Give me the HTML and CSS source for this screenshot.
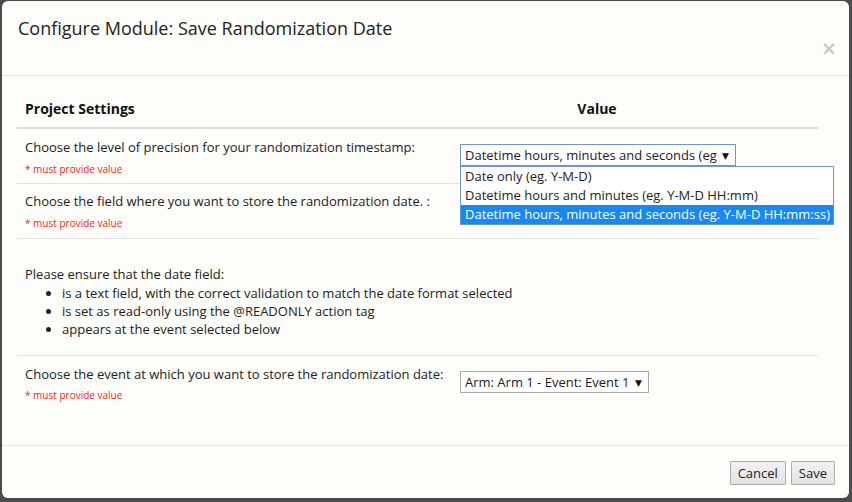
FILE: index.html
```
<!DOCTYPE html>
<html>
<head>
<meta charset="utf-8">
<link rel="stylesheet" href="styles.css">
</head>
<body>
<div class="modal">
  <div class="modal-header">
    <h4 class="modal-title">Configure Module: Save Randomization Date</h4>
    <div class="close-row"><span class="close">×</span></div>
  </div>
  <div class="modal-body">
    <table class="settings">
      <colgroup>
        <col class="c1">
        <col class="c2">
        <col class="c3">
      </colgroup>
      <thead>
        <tr>
          <th class="col-label">Project Settings</th>
          <th class="col-value">Value</th>
          <th class="col-extra"></th>
        </tr>
      </thead>
      <tbody>
        <tr class="row-field first">
          <td>
            <div class="label">Choose the level of precision for your randomization timestamp:</div>
            <div class="required">* must provide value</div>
          </td>
          <td class="value-cell">
            <div class="select-wrap">
              <div class="select focused"><span class="select-text">Datetime hours, minutes and seconds (eg. Y-M-D HH:mm:ss)</span><span class="arrow">▼</span></div>
              <div class="dropdown">
                <div class="option">Date only (eg. Y-M-D)</div>
                <div class="option">Datetime hours and minutes (eg. Y-M-D HH:mm)</div>
                <div class="option selected">Datetime hours, minutes and seconds (eg. Y-M-D HH:mm:ss)</div>
              </div>
            </div>
          </td>
          <td></td>
        </tr>
        <tr class="row-field second">
          <td>
            <div class="label">Choose the field where you want to store the randomization date. :</div>
            <div class="required">* must provide value</div>
          </td>
          <td></td>
          <td></td>
        </tr>
        <tr class="row-info">
          <td colspan="2">
            <div class="label">Please ensure that the date field:</div>
            <ul class="bullets">
              <li>is a text field, with the correct validation to match the date format selected</li>
              <li>is set as read-only using the @READONLY action tag</li>
              <li>appears at the event selected below</li>
            </ul>
          </td>
          <td></td>
        </tr>
        <tr class="row-field fourth">
          <td>
            <div class="label">Choose the event at which you want to store the randomization date:</div>
            <div class="required">* must provide value</div>
          </td>
          <td class="value-cell">
            <div class="select plain"><span class="select-text">Arm: Arm 1 - Event: Event 1</span><span class="arrow">▼</span></div>
          </td>
          <td></td>
        </tr>
      </tbody>
    </table>
  </div>
  <div class="modal-footer">
    <button class="btn">Cancel</button>
    <button class="btn">Save</button>
  </div>
</div>
</body>
</html>
```
FILE: styles.css
```
html, body {
  margin: 0;
  padding: 0;
}
body {
  background: #4b4b4b;
  font-family: "Open Sans", "DejaVu Sans", sans-serif;
  font-size: 13px;
  color: #222;
  width: 852px;
  height: 502px;
  overflow: hidden;
}
.modal {
  margin: 1px 0 0 2px;
  width: 847px;
  height: 497px;
  background: #fdfdf9;
  border-radius: 6px;
  display: flex;
  flex-direction: column;
}
.modal-header {
  height: 75px;
  flex: none;
  border-bottom: 1px solid #e3e3e0;
  padding: 13px 17px 0 16px;
  box-sizing: border-box;
}
.modal-title {
  margin: 0;
  font-size: 18px;
  font-weight: normal;
  line-height: 28px;
  color: #222;
}
.close-row {
  display: flex;
  justify-content: flex-end;
  margin-top: -4px;
  margin-right: -5px;
}
.close {
  font-size: 19px;
  font-weight: bold;
  color: #c9c9c6;
  line-height: 20px;
  font-family: "DejaVu Sans", sans-serif;
}
.modal-body {
  flex: 1;
  padding: 20px 15px 0 15px;
}
.settings {
  width: 801px;
  border-collapse: collapse;
  table-layout: fixed;
}
.c1 { width: 435px; }
.c2 { width: 290px; }
.c3 { width: 76px; }
.settings th {
  font-weight: bold;
  font-size: 14px;
  line-height: 20px;
  padding: 3px 8px 8px 8px;
  border-bottom: 2px solid #dcdcdc;
  color: #111;
}
.col-label {
  text-align: left;
}
.col-value {
  text-align: center;
}
.settings td {
  vertical-align: top;
  padding: 7px 8px 7px 8px;
  border-top: 1px solid #e2e2df;
}
.settings tr.first td {
  border-top: none;
  padding-top: 8px;
  padding-bottom: 6px;
}
.settings tr.fourth td {
  padding-top: 8px;
  padding-bottom: 7px;
}
.label {
  line-height: 20px;
  color: #222;
}
.required {
  color: #ff1a1a;
  font-size: 10px;
  line-height: 16px;
  margin-top: 4px;
}
.settings tr.fourth .required {
  margin-top: 3px;
}
.settings tr.row-info td {
  padding-top: 25px;
  padding-bottom: 17px;
}
.bullets {
  margin: 0;
  padding-left: 37px;
  line-height: 18px;
}
.settings tr td.value-cell {
  padding-top: 15px;
}
.select-wrap {
  position: relative;
}
.select {
  display: flex;
  align-items: center;
  height: 22px;
  box-sizing: border-box;
  padding: 0 6px 0 4px;
  background: #fff;
  font-size: 13px;
  white-space: nowrap;
  overflow: hidden;
}
.select.focused {
  width: 276px;
  border: 1px solid #6f94d6;
}
.select.plain {
  width: 189px;
  border: 1px solid #a9a9a9;
}
.select-text {
  flex: 1;
  overflow: hidden;
  min-width: 0;
}
.arrow {
  font-size: 9px;
  margin-left: 5px;
  color: #111;
}
.dropdown {
  position: absolute;
  left: 0;
  top: 22px;
  width: 374px;
  background: #fff;
  border: 1px solid #6f94d6;
  box-sizing: border-box;
  z-index: 2;
}
.option {
  height: 19px;
  line-height: 19px;
  padding-left: 4px;
  white-space: nowrap;
  color: #222;
}
.option.selected {
  background: #1689f2;
  color: #fff;
}
.modal-footer {
  flex: none;
  border-top: 1px solid #e3e3e0;
  padding: 15px 14px 13px 15px;
  display: flex;
  justify-content: flex-end;
  gap: 5px;
}
.btn {
  font-family: "Open Sans", "DejaVu Sans", sans-serif;
  font-size: 13px;
  height: 24px;
  padding: 0 7px;
  border: 1px solid #adadad;
  border-radius: 1px;
  background: linear-gradient(#f2f2f2, #e2e2e2);
  color: #222;
}
```
